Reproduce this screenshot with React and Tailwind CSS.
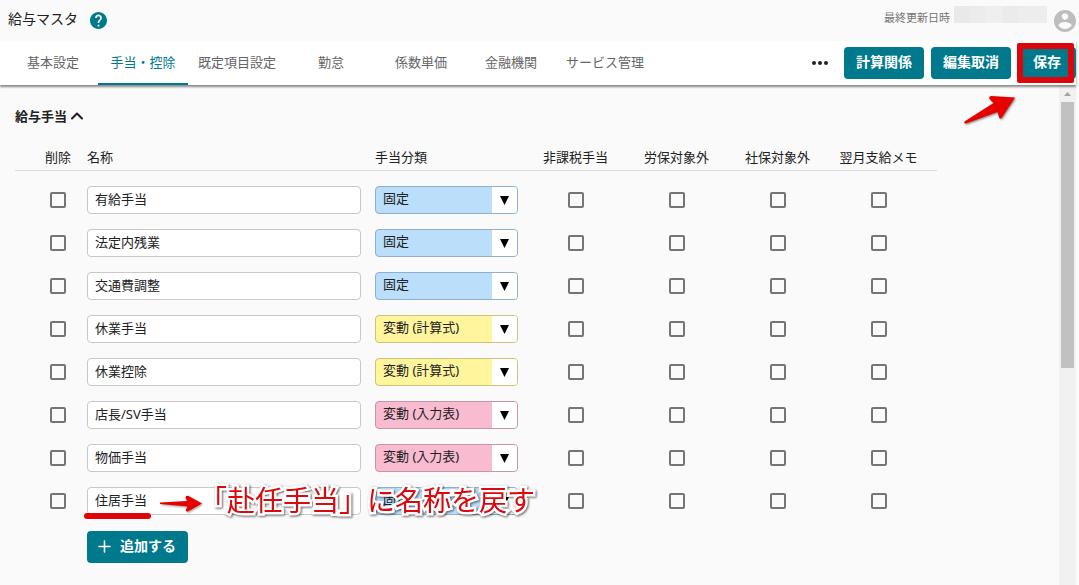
import { useState } from "react";
import { ChevronUp, Plus } from "lucide-react";

const tabs = [
  "基本設定",
  "手当・控除",
  "既定項目設定",
  "勤怠",
  "係数単価",
  "金融機関",
  "サービス管理",
];

const categories = ["固定", "変動 (計算式)", "変動 (入力表)"];

const categoryStyles = {
  固定: "bg-[#bbdefb] border-[#8fb0cb]",
  "変動 (計算式)": "bg-[#fff59d] border-[#cbc37c]",
  "変動 (入力表)": "bg-[#f8bbd0] border-[#c795a6]",
};

const flags = ["非課税手当", "労保対象外", "社保対象外", "翌月支給メモ"];

const initialRows = [
  { id: 1, name: "有給手当", category: "固定" },
  { id: 2, name: "法定内残業", category: "固定" },
  { id: 3, name: "交通費調整", category: "固定" },
  { id: 4, name: "休業手当", category: "変動 (計算式)" },
  { id: 5, name: "休業控除", category: "変動 (計算式)" },
  { id: 6, name: "店長/SV手当", category: "変動 (入力表)" },
  { id: 7, name: "物価手当", category: "変動 (入力表)" },
  { id: 8, name: "住居手当", category: "固定", note: "「赴任手当」に名称を戻す" },
];

function Checkbox({ label }) {
  return (
    <input
      type="checkbox"
      aria-label={label}
      className="block size-4 appearance-none rounded-xs border-2 border-[#757575] bg-[#fafafa] checked:bg-[#00798c]"
    />
  );
}

function CategorySelect({ value, onChange }) {
  return (
    <div className="relative w-[143px]">
      <select
        aria-label="手当分類"
        value={value}
        onChange={(e) => onChange(e.target.value)}
        className={`block h-7 w-full appearance-none rounded-sm border pr-7 pb-0.5 pl-[7px] text-[13px] ${categoryStyles[value]}`}
      >
        {categories.map((category) => (
          <option key={category}>{category}</option>
        ))}
      </select>
      <span className="pointer-events-none absolute inset-y-px right-px flex w-[25px] items-center justify-center rounded-r-[3px] bg-white">
        <svg width="9" height="9" viewBox="0 0 9 9">
          <path d="M0 0h9L4.5 9z" fill="#000" />
        </svg>
      </span>
    </div>
  );
}

function RenameNote({ text }) {
  return (
    <div className="pointer-events-none absolute top-0 -left-[3px] z-10 h-full">
      <span className="absolute top-[26px] left-0 h-1.5 w-[67px] rounded-full bg-[#dd0509]" />
      <svg
        className="absolute top-1.5 left-[75px] drop-shadow-[1px_1px_1px_rgba(0,0,0,0.4)]"
        width="44"
        height="20"
        viewBox="0 0 44 20"
      >
        <path
          d="M1 9.500 28 8l-1.500-3.500Q26.500 2 29.500 3L43 10.500 29 18.500Q26 19 27 16.500L28.500 13.500 1 11z"
          fill="#e60000"
        />
      </svg>
      <span className="absolute -top-2 left-[115px] text-[28px] leading-[42px] whitespace-nowrap text-[#d9090d] drop-shadow-[1px_1px_1px_rgba(0,0,0,0.6)] [-webkit-text-stroke:5px_white] [paint-order:stroke_fill]">
        {text}
      </span>
    </div>
  );
}

function Header() {
  return (
    <header className="flex h-[41px] shrink-0 items-center justify-between pl-2">
      <div className="flex items-center gap-3">
        <h1 className="pb-1 text-sm">給与マスタ</h1>
        <button type="button" aria-label="ヘルプ">
          <svg width="17" height="17" viewBox="2 2 20 20" fill="#00798c">
            <path d="M12 2C6.480 2 2 6.480 2 12s4.480 10 10 10 10-4.480 10-10S17.520 2 12 2zm1 17h-2v-2h2v2zm2.070-7.750-.9.920C13.450 12.900 13 13.500 13 15h-2v-.5c0-1.100.45-2.100 1.170-2.830l1.240-1.260c.37-.36.59-.86.59-1.410 0-1.100-.9-2-2-2s-2 .9-2 2H8c0-2.210 1.790-4 4-4s4 1.790 4 4c0 .88-.36 1.680-.93 2.250z" />
          </svg>
        </button>
      </div>
      <div className="flex items-center">
        <p className="pb-1 text-[11px] text-[#757575]">最終更新日時</p>
        <div className="mr-[7px] mb-3 ml-1 flex h-[17px] w-[93px]">
          <span className="w-4 bg-[#e9e9e9]" />
          <span className="w-4 bg-[#ececec]" />
          <span className="w-4 bg-[#efefef]" />
          <span className="w-4 bg-[#ebebeb]" />
          <span className="flex-1 bg-[#ededed]" />
        </div>
        <button type="button" aria-label="アカウント">
          <svg width="22" height="22" viewBox="2 2 20 20" fill="#bdbdbd">
            <path d="M12 2C6.480 2 2 6.480 2 12s4.480 10 10 10 10-4.480 10-10S17.520 2 12 2zm0 3c1.660 0 3 1.340 3 3s-1.340 3-3 3-3-1.340-3-3 1.340-3 3-3zm0 14.200c-2.500 0-4.710-1.280-6-3.220.03-1.990 4-3.080 6-3.080 1.990 0 5.970 1.090 6 3.080-1.290 1.940-3.500 3.220-6 3.220z" />
          </svg>
        </button>
      </div>
    </header>
  );
}

function Toolbar({ activeTab, setActiveTab }) {
  return (
    <div className="relative z-10 flex h-11 shrink-0 items-center justify-between bg-white shadow-[0_2px_2px_rgba(0,0,0,0.45)]">
      <nav className="flex h-full pl-2">
        {tabs.map((tab) => (
          <button
            key={tab}
            type="button"
            onClick={() => setActiveTab(tab)}
            className={`min-w-[90px] border-b-2 px-2.5 pt-0.5 text-[13px] whitespace-nowrap ${
              tab === activeTab
                ? "border-[#00798c] text-[#00798c]"
                : "border-transparent text-[#666]"
            }`}
          >
            {tab}
          </button>
        ))}
      </nav>
      <div className="flex items-center gap-[7px] text-sm font-bold text-white">
        <button type="button" aria-label="その他" className="mr-[7px] p-0.5">
          <svg width="16" height="4" viewBox="0 0 16 4" fill="#222">
            <circle cx="2" cy="2" r="2" />
            <circle cx="8" cy="2" r="2" />
            <circle cx="14" cy="2" r="2" />
          </svg>
        </button>
        <button type="button" className="h-8 w-20 rounded-sm bg-[#00798c] pb-0.5">
          計算関係
        </button>
        <button type="button" className="h-8 w-20 rounded-sm bg-[#00798c] pb-0.5">
          編集取消
        </button>
        <div className="relative">
          <button type="button" className="h-8 w-[58px] rounded-sm bg-[#00798c] pb-0.5">
            保存
          </button>
          <span className="pointer-events-none absolute -top-1 right-0.5 -bottom-1 -left-px rounded-xs border-[6px] border-[#dd0509]" />
          <svg
            className="pointer-events-none absolute top-12 right-[59px] drop-shadow-[1px_1px_1px_rgba(0,0,0,0.5)]"
            width="54"
            height="30"
            viewBox="0 0 54 30"
          >
            <path
              d="M1 28Q1 26.500 3 25.500L30.500 8 26.500 4Q25.500 1.500 28 1L52 2.500 38.500 23Q36.500 24.500 36 22L34.500 17 3 28.500z"
              fill="#e60000"
            />
          </svg>
        </div>
      </div>
    </div>
  );
}

export default function App() {
  const [activeTab, setActiveTab] = useState("手当・控除");
  const [rows, setRows] = useState(initialRows);

  const updateRow = (id, values) => {
    setRows(rows.map((row) => (row.id === id ? { ...row, ...values } : row)));
  };

  const addRow = () => {
    setRows([...rows, { id: rows.length + 1, name: "", category: "固定" }]);
  };

  return (
    <div className="flex h-screen flex-col overflow-hidden bg-[#fafafa] pr-[3px] font-['Noto_Sans','Noto_Sans_CJK_JP',sans-serif] text-[#212121]">
      <Header />
      <Toolbar activeTab={activeTab} setActiveTab={setActiveTab} />
      <div className="flex min-h-0 flex-1">
        <main className="min-w-0 flex-1 overflow-hidden pt-[21px] pl-[15px]">
          <button
            type="button"
            className="flex items-center text-[13px] leading-5 font-bold"
          >
            給与手当
            <ChevronUp size={20} strokeWidth={2.5} />
          </button>

          <table className="mt-3.5 w-full max-w-[922px] table-fixed text-[13px]">
            <thead>
              <tr className="h-[30px] border-b border-[#dcdcdc] text-left leading-5 [&>th]:pt-1">
                <th className="w-[72px] pr-4 text-right font-normal">削除</th>
                <th className="w-72 font-normal">名称</th>
                <th className="w-[150px] font-normal">手当分類</th>
                {flags.map((flag) => (
                  <th
                    key={flag}
                    className="w-[101px] text-center font-normal whitespace-nowrap"
                  >
                    {flag}
                  </th>
                ))}
                <th className="w-2" />
              </tr>
            </thead>
            <tbody className="before:block before:h-2 before:content-['']">
              {rows.map((row) => (
                <tr key={row.id} className="h-[43px]">
                  <td className="pl-[35px]">
                    <Checkbox label={`${row.name} 削除`} />
                  </td>
                  <td>
                    <div className="relative w-[274px]">
                      <input
                        type="text"
                        aria-label="名称"
                        value={row.name}
                        onChange={(e) =>
                          updateRow(row.id, { name: e.target.value })
                        }
                        className="block h-7 w-full rounded-sm border border-[#c8c8c8] bg-white px-[7px] pb-1"
                      />
                      {row.note && <RenameNote text={row.note} />}
                    </div>
                  </td>
                  <td>
                    <CategorySelect
                      value={row.category}
                      onChange={(category) => updateRow(row.id, { category })}
                    />
                  </td>
                  {flags.map((flag) => (
                    <td key={flag}>
                      <div className="flex justify-center">
                        <Checkbox label={`${row.name} ${flag}`} />
                      </div>
                    </td>
                  ))}
                  <td />
                </tr>
              ))}
            </tbody>
          </table>

          <button
            type="button"
            onClick={addRow}
            className="mt-2 ml-[72px] flex h-8 items-center gap-1.5 rounded-sm bg-[#00798c] pr-3 pb-px pl-2 text-sm font-bold text-white"
          >
            <Plus size={19} strokeWidth={2} />
            追加する
          </button>
        </main>

        {/* Scrollbar */}
        <div className="flex w-[17px] shrink-0 flex-col items-center bg-[#f1f1f1]">
          <div className="flex h-[17px] items-center">
            <svg width="7" height="4" viewBox="0 0 7 4">
              <path d="M3.500 0 7 4H0z" fill="#a3a3a3" />
            </svg>
          </div>
          <div className="h-[266px] w-[13px] bg-[#c1c1c1]" />
        </div>
      </div>
    </div>
  );
}
